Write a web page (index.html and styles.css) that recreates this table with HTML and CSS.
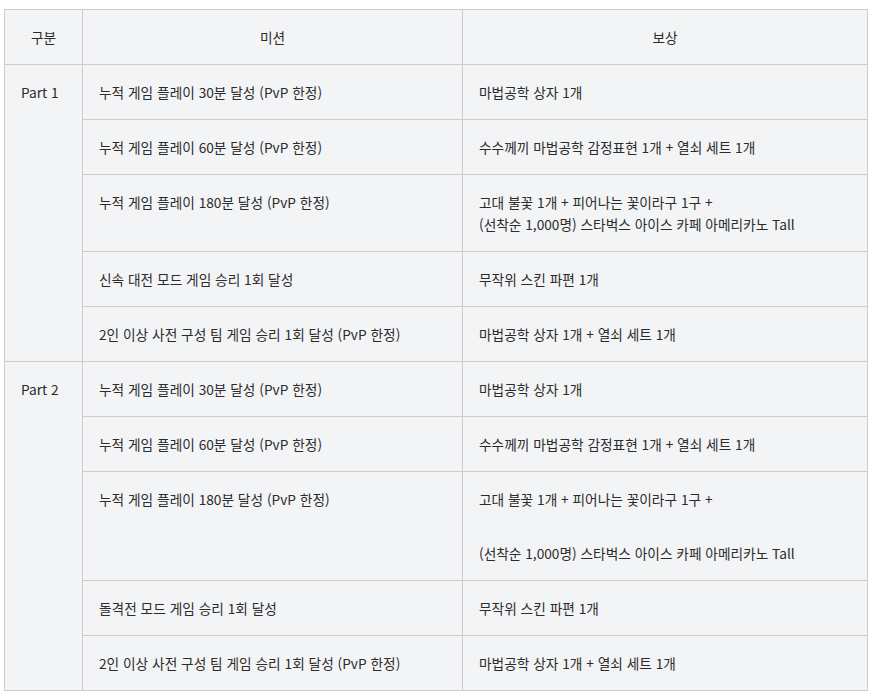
FILE: index.html
```html
<!DOCTYPE html>
<html lang="ko">
<head>
<meta charset="utf-8">
<link rel="stylesheet" href="styles.css">
</head>
<body>
<table class="mission-table">
  <colgroup>
    <col class="c-part">
    <col class="c-mission">
    <col class="c-reward">
  </colgroup>
  <thead>
    <tr>
      <th>구분</th>
      <th>미션</th>
      <th>보상</th>
    </tr>
  </thead>
  <tbody>
    <tr>
      <td rowspan="5">Part 1</td>
      <td>누적 게임 플레이 30분 달성 (PvP 한정)</td>
      <td>마법공학 상자 1개</td>
    </tr>
    <tr>
      <td>누적 게임 플레이 60분 달성 (PvP 한정)</td>
      <td>수수께끼 마법공학 감정표현 1개 + 열쇠 세트 1개</td>
    </tr>
    <tr>
      <td>누적 게임 플레이 180분 달성 (PvP 한정)</td>
      <td>고대 불꽃 1개 + 피어나는 꽃이라구 1구 +<br>(선착순 1,000명) 스타벅스 아이스 카페 아메리카노 Tall</td>
    </tr>
    <tr>
      <td>신속 대전 모드 게임 승리 1회 달성</td>
      <td>무작위 스킨 파편 1개</td>
    </tr>
    <tr>
      <td>2인 이상 사전 구성 팀 게임 승리 1회 달성 (PvP 한정)</td>
      <td>마법공학 상자 1개 + 열쇠 세트 1개</td>
    </tr>
    <tr>
      <td rowspan="5">Part 2</td>
      <td>누적 게임 플레이 30분 달성 (PvP 한정)</td>
      <td>마법공학 상자 1개</td>
    </tr>
    <tr>
      <td>누적 게임 플레이 60분 달성 (PvP 한정)</td>
      <td>수수께끼 마법공학 감정표현 1개 + 열쇠 세트 1개</td>
    </tr>
    <tr>
      <td>누적 게임 플레이 180분 달성 (PvP 한정)</td>
      <td><p class="line">고대 불꽃 1개 + 피어나는 꽃이라구 1구 +</p><p class="line gap">(선착순 1,000명) 스타벅스 아이스 카페 아메리카노 Tall</p></td>
    </tr>
    <tr>
      <td>돌격전 모드 게임 승리 1회 달성</td>
      <td>무작위 스킨 파편 1개</td>
    </tr>
    <tr>
      <td>2인 이상 사전 구성 팀 게임 승리 1회 달성 (PvP 한정)</td>
      <td>마법공학 상자 1개 + 열쇠 세트 1개</td>
    </tr>
  </tbody>
</table>
</body>
</html>
```

FILE: styles.css
```css
html, body {
  margin: 0;
  padding: 0;
  background: #ffffff;
}
body {
  padding: 9px 0 0 4px;
  font-family: "Noto Sans CJK KR", "Noto Sans", sans-serif;
  font-size: 13.7px;
  color: #2b2b2b;
}
.mission-table {
  border-collapse: collapse;
  table-layout: fixed;
  width: 863px;
  background: #f3f4f6;
}
.c-part { width: 78px; }
.c-mission { width: 380px; }
.c-reward { width: 405px; }
.mission-table th,
.mission-table td {
  border: 1px solid #cccccc;
  padding: 16px 16px;
  line-height: 22px;
  vertical-align: top;
  text-align: left;
  font-weight: normal;
}
.mission-table th {
  text-align: center;
}
.line {
  margin: 0;
}
.line.gap {
  margin-top: 32px;
}
```
